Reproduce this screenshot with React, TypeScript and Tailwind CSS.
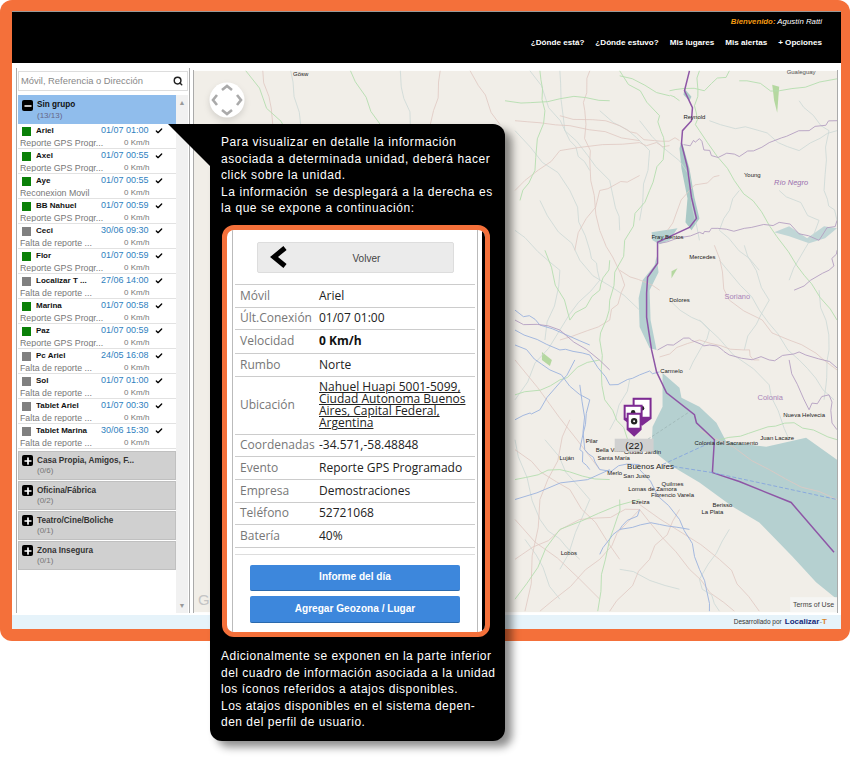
import { Check, Minus, Plus, Search } from "lucide-react";

const UNITS = [
  { name: "Ariel", time: "01/07 01:00", sub: "Reporte GPS Progr...", on: true },
  { name: "Axel", time: "01/07 00:55", sub: "Reporte GPS Progr...", on: true },
  { name: "Aye", time: "01/07 00:55", sub: "Reconexion Movil", on: true },
  { name: "BB Nahuel", time: "01/07 00:59", sub: "Reporte GPS Progr...", on: true },
  { name: "Ceci", time: "30/06 09:30", sub: "Falta de reporte ...", on: false },
  { name: "Flor", time: "01/07 00:59", sub: "Reporte GPS Progr...", on: true },
  { name: "Localizar T ...", time: "27/06 14:00", sub: "Falta de reporte ...", on: false },
  { name: "Marina", time: "01/07 00:58", sub: "Reporte GPS Progr...", on: true },
  { name: "Paz", time: "01/07 00:59", sub: "Reporte GPS Progr...", on: true },
  { name: "Pc Ariel", time: "24/05 16:08", sub: "Falta de reporte ...", on: false },
  { name: "Sol", time: "01/07 01:00", sub: "Falta de reporte ...", on: false },
  { name: "Tablet Ariel", time: "01/07 00:30", sub: "Falta de reporte ...", on: false },
  { name: "Tablet Marina", time: "30/06 15:30", sub: "Falta de reporte ...", on: false },
];

const GROUPS = [
  { name: "Casa Propia, Amigos, F...", count: "(0/6)" },
  { name: "Oficina/Fábrica", count: "(0/2)" },
  { name: "Teatro/Cine/Boliche", count: "(0/1)" },
  { name: "Zona Insegura", count: "(0/1)" },
];

const NAV = ["¿Dónde está?", "¿Dónde estuvo?", "Mis lugares", "Mis alertas", "+ Opciones"];

const DETAILS = [
  { label: "Móvil", value: "Ariel", h: "h-[23px]" },
  { label: "Últ.Conexión", value: "01/07 01:00", h: "h-[22px]" },
  { label: "Velocidad", value: "0 Km/h", h: "h-[24px]", bold: true },
  { label: "Rumbo", value: "Norte", h: "h-[23px]" },
  { label: "Ubicación", value: "Nahuel Huapi 5001-5099, Ciudad Autonoma Buenos Aires, Capital Federal, Argentina", h: "h-[58px]", link: true },
  { label: "Coordenadas", value: "-34.571,-58.48848", h: "h-[22px]" },
  { label: "Evento", value: "Reporte GPS Programado", h: "h-[23px]" },
  { label: "Empresa", value: "Demostraciones", h: "h-[23px]" },
  { label: "Teléfono", value: "52721068", h: "h-[22px]" },
  { label: "Batería", value: "40%", h: "h-[23px]" },
];

const GREEN_ROADS = [
  "M245 70L290 140",
  "M620 70L660 115L665 145L650 190L625 240L610 300L600 340L605 400L628 440",
  "M700 70L695 105L700 130L735 180L770 225L805 275L838 320",
  "M515 395L560 380L600 360",
  "M545 250L570 320L600 290L610 260",
  "M515 480L560 470L610 480",
  "M620 500L610 540L598 612",
  "M515 600L560 530L640 500",
  "M670 90L705 90L730 70",
  "M720 440L760 430L795 423L838 440",
  "M620 75L670 95L680 100",
  "M540 70L545 110L535 170L520 200",
  "M505 100L560 98L610 100",
  "M740 80L780 90L838 78",
  "M350 70L380 124",
];

const PINK_ROADS = [
  "M262 70L272 124",
  "M470 70L500 124",
  "M515 360L600 470",
  "M515 190L560 150L640 142L670 145",
  "M560 115L620 125L655 140L680 140",
  "M720 175L690 190L668 230",
  "M540 612L600 560L640 510L690 570L735 612",
  "M640 505L720 560L760 612",
  "M515 520L600 600",
  "M660 357L700 340L745 350L760 360",
  "M515 560L580 520L640 510",
  "M515 120L570 125L640 140",
  "M590 70L585 110L590 160L600 230",
  "M600 230L625 285L610 320L560 340",
  "M620 270L660 290",
  "M570 420L540 500L525 612",
  "M715 245L730 300L790 340L838 370",
  "M700 430L770 470L838 500",
  "M640 175L600 190L575 250",
  "M515 450L570 490L620 560",
  "M680 510L650 560L610 612",
  "M440 70L430 124",
];

const BLUE_ROADS = [
  "M515 330L560 350L590 355L610 385L640 375L660 372",
  "M515 345L550 370L590 400L580 450L590 470",
  "M580 385L585 450L600 470L640 465",
  "M640 470L680 520L700 570L710 612",
  "M620 530L660 525L690 530",
  "M575 360L540 410L515 420",
  "M610 470L515 500",
  "M640 510L620 530L600 555",
  "M515 310L540 325L590 345",
];

const GRAY_ROADS = [
  "M290 70L300 124",
  "M400 70L410 124",
  "M515 130L570 190L590 250L600 280L560 330L515 400",
  "M530 70L570 140L590 170",
  "M640 120L690 175L700 240",
  "M720 260L760 310L800 360L835 400",
  "M820 290L830 350L825 400",
  "M515 440L540 520L580 560",
  "M560 70L565 130L610 180L620 230",
  "M600 110L650 150L640 220",
  "M540 200L580 260L640 310",
  "M745 245L770 300L745 350",
  "M700 320L770 385L790 440",
  "M515 230L560 270L545 340",
  "M800 100L830 130L825 190L838 220",
  "M710 120L760 130L800 150L838 130",
  "M780 190L820 220L790 280",
  "M630 380L610 430",
  "M545 440L590 500L560 570",
  "M730 530L700 580L720 612",
  "M620 570L680 590",
  "M740 190L720 230L760 270",
  "M670 300L710 330L690 370",
  "M525 540L560 600",
];

const BORDERS = [
  "M684 144L700 138L712 155L740 156L770 142L810 130L838 120",
  "M660 243L700 232L712 228L745 228L780 222L820 240L838 220",
  "M658 350L690 338L710 345L730 355L770 360L800 352L838 368",
  "M795 290L830 270L838 250",
  "M790 360L810 410L830 395L838 430",
  "M515 320L560 330L610 370",
];

// adds a small fixed wobble so that road lines don't look ruled
function wobble(d: string) {
  const nums = d.match(/\d+/g)!.map(Number);
  let seed = nums.reduce((a, b) => a + b, 0);
  const rnd = () => {
    seed = (seed * 9301 + 49297) % 233280;
    return seed / 233280 - 0.5;
  };
  let out = `M${nums[0]} ${nums[1]}`;
  for (let i = 2; i < nums.length; i += 2) {
    const [x0, y0, x1, y1] = [nums[i - 2], nums[i - 1], nums[i], nums[i + 1]];
    for (let s = 1; s <= 4; s++) {
      const off = s === 4 ? 0 : 1;
      out += `L${(x0 + ((x1 - x0) * s) / 4 + off * rnd() * 6).toFixed(1)} ${(y0 + ((y1 - y0) * s) / 4 + off * rnd() * 6).toFixed(1)}`;
    }
  }
  return out;
}

function Pin({ x, y, w, h, dark }: { x: number; y: number; w: number; h: number; dark?: boolean }) {
  return (
    <g>
      <path d={`M${x} ${y}h${w}v${h - 7}l-${w / 2} 7l-${w / 2} -7z`} fill="#7d2a92" />
      <rect x={x + 2} y={y + 2} width={w - 4} height={h - 11} fill="#fff" />
      <circle cx={x + w / 2} cy={y + (h - 7) / 2} r={dark ? 3.2 : 2.2} fill="#222" />
      {dark && <circle cx={x + w / 2} cy={y + (h - 7) / 2} r={1} fill="#fff" />}
    </g>
  );
}

function MapDrawing() {
  return (
    <svg viewBox="193 70 645 543" className="block h-full w-full" xmlns="http://www.w3.org/2000/svg">
      <rect x="193" y="70" width="645" height="543" fill="#f1eee8" />

      {/* agua */}
      <path
        d="M663 373L680 388L682 398L700 407L717 423L727 442L767 447L807 438L838 460L838 600L817 583L793 557L760 523L733 507L700 483L673 467L652 450L653 427L663 407L663 393Z"
        fill="#b5d0d0"
      />
      <path d="M657 256L659 272L650 290L651 320L657 350L650 348L640 327L639 298L643 280L655 265Z" fill="#b5d0d0" />
      <path d="M682 140L690 168L695 197L700 218L692 230L686 222L688 198L682 168L680 148Z" fill="#a9c9c6" />
      <path d="M652 232L678 228L670 240L660 244L653 240Z" fill="#b5d0d0" />
      <path d="M685 88L692 96L690 100L684 94Z" fill="#a9c9c6" />
      <path d="M775 232L790 226L808 238L825 226L838 228L826 238L810 243L790 236Z" fill="#c0d6d6" />

      {/* verdes */}
      <path d="M773 84L780 86L778 112L775 100Z" fill="#b5d8a0" />
      <path d="M542 352L552 360L550 366L542 360Z" fill="#b5d8a0" />
      <path d="M672 271L678 268L672 278Z" fill="#b5d8a0" />

      {GRAY_ROADS.map((d) => (
        <path key={d} d={wobble(d)} fill="none" stroke="#cbd8d6" strokeWidth="0.8" />
      ))}
      {PINK_ROADS.map((d) => (
        <path key={d} d={wobble(d)} fill="none" stroke="#e0c8c2" strokeWidth="0.8" />
      ))}
      {GREEN_ROADS.map((d) => (
        <path key={d} d={wobble(d)} fill="none" stroke="#b4deae" strokeWidth="0.9" />
      ))}
      {BLUE_ROADS.map((d) => (
        <path key={d} d={wobble(d)} fill="none" stroke="#9ab2de" strokeWidth="0.9" />
      ))}
      {BORDERS.map((d) => (
        <path key={d} d={wobble(d)} fill="none" stroke="#b49fc2" strokeWidth="0.9" />
      ))}

      {/* limite internacional */}
      <path
        d="M690 70L685 90L693 107L692 120L683 130L682 143L688 167L692 197L697 218L690 227L677 233L658 242L658 263L648 277L647 293L647 317L652 350L657 372L667 393L695 415L697 423L715 440L713 473L740 482L792 503L835 553"
        fill="none"
        stroke="#8e56a6"
        strokeWidth="1.5"
      />
      <path d="M663 465L713 442M668 466L713 473L838 500" fill="none" stroke="#7f9fe0" strokeWidth="0.8" strokeDasharray="4 2" />
      <path d="M640 445L690 412" fill="none" stroke="#9db5b5" strokeWidth="0.8" strokeDasharray="3 2" />

      <g fontFamily="'Liberation Sans', sans-serif" fontSize="6" fill="#222">
        <text x="300" y="75" textAnchor="middle">Gösw</text>
        <text x="802" y="73" textAnchor="middle" fill="#555">Gualeguay</text>
        <text x="695" y="118" textAnchor="middle">Reynold</text>
        <text x="753" y="176" textAnchor="middle">Young</text>
        <text x="668" y="239" textAnchor="middle">Fray Bentos</text>
        <text x="703" y="259" textAnchor="middle">Mercedes</text>
        <text x="680" y="302" textAnchor="middle">Dolores</text>
        <text x="672" y="373" textAnchor="middle">Carmelo</text>
        <text x="805" y="417" textAnchor="middle">Nueva Helvecia</text>
        <text x="778" y="440" textAnchor="middle">Juan Lacaze</text>
        <text x="727" y="445" textAnchor="middle">Colonia del Sacramento</text>
        <text x="592" y="443" textAnchor="middle">Pilar</text>
        <text x="567" y="460" textAnchor="middle">Luján</text>
        <text x="610" y="452" textAnchor="middle">Bella Vista</text>
        <text x="643" y="454" textAnchor="middle">Ciudad Jardín</text>
        <text x="614" y="460" textAnchor="middle">Santa María</text>
        <text x="615" y="475" textAnchor="middle">Merlo</text>
        <text x="637" y="478" textAnchor="middle">San Justo</text>
        <text x="673" y="486" textAnchor="middle">Quilmes</text>
        <text x="653" y="491" textAnchor="middle">Lomas de Zamora</text>
        <text x="673" y="497" textAnchor="middle">Florencio Varela</text>
        <text x="641" y="505" textAnchor="middle">Ezeiza</text>
        <text x="723" y="508" textAnchor="middle">Berisso</text>
        <text x="713" y="515" textAnchor="middle">La Plata</text>
        <text x="569" y="556" textAnchor="middle">Lobos</text>
        <text x="651" y="469" textAnchor="middle" fontSize="8">Buenos Aires</text>
        <text x="792" y="185" textAnchor="middle" fontSize="7.5" fontStyle="italic" fill="#9a6fae">Río Negro</text>
        <text x="738" y="299" textAnchor="middle" fontSize="7.5" fill="#a884b8">Soriano</text>
        <text x="771" y="400" textAnchor="middle" fontSize="7.5" fill="#a884b8">Colonia</text>
      </g>

      <Pin x={633} y={398} w={19} h={28} />
      <Pin x={624} y={405} w={19} h={22} />
      <Pin x={627} y={413} w={15} h={24} dark />
      <rect x="615" y="439" width="39" height="13" fill="#d0d0d0" />
      <text x="634.5" y="449.5" textAnchor="middle" fontFamily="'Liberation Sans', sans-serif" fontSize="10" fill="#111">(22)</text>

      <text x="197" y="606" fontFamily="'Liberation Sans', sans-serif" fontSize="15" fill="#c4c4c4">Go</text>
      <rect x="791" y="598" width="47" height="15" fill="#f5f5f3" />
      <text x="835" y="608" textAnchor="end" fontFamily="'Liberation Sans', sans-serif" fontSize="7" fill="#444">Terms of Use</text>
    </svg>
  );
}

function NavControl() {
  return (
    <svg viewBox="0 0 40 40" className="absolute left-[13px] top-[10px] h-[40px] w-[40px] drop-shadow-md" xmlns="http://www.w3.org/2000/svg">
      <circle cx="20" cy="20" r="17.5" fill="#fff" />
      <g fill="none" stroke="#aaa" strokeWidth="2.6">
        <path d="M15 10L20 6L25 10" />
        <path d="M15 30L20 34L25 30" />
        <path d="M10 15L6 20L10 25" />
        <path d="M30 15L34 20L30 25" />
      </g>
    </svg>
  );
}

function UnitRow({ name, time, sub, on }: { name: string; time: string; sub: string; on: boolean }) {
  return (
    <div className="h-[25px] border-b border-[#e2e2e2] pl-[2px]">
      <div className="flex h-[14px] items-center">
        <span className={on ? "ml-[2px] h-[9px] w-[9px] bg-[#0a8008]" : "ml-[2px] h-[9px] w-[9px] bg-[#808080]"} />
        <span className="ml-[5px] w-[65px] truncate text-[8px] font-bold text-[#111]">{name}</span>
        <span className="w-[54px] text-[9px] text-[#2f7fc0]">{time}</span>
        <Check className="h-[8px] w-[8px] text-black" strokeWidth={4} />
      </div>
      <div className="flex h-[10px] items-center text-[8.8px] leading-none text-[#777]">
        <span className="w-[104px] truncate">{sub}</span>
        <span className="w-[24px] whitespace-nowrap text-right text-[8px]">0 Km/h</span>
      </div>
    </div>
  );
}

function GroupRow({ name, count }: { name: string; count: string }) {
  return (
    <div className="mt-[1px] flex h-[29px] border border-[#c0c0c0] bg-[#d0d0d0] pl-[3px] pt-[3px]">
      <span className="flex h-[11px] w-[11px] items-center justify-center rounded-[2px] bg-black">
        <Plus className="h-[10px] w-[10px] text-white" strokeWidth={4} />
      </span>
      <div className="ml-[4px] pt-[2px] leading-none">
        <p className="text-[8.2px] font-bold text-[#333]">{name}</p>
        <p className="mt-[2px] text-[8px] text-[#777]">{count}</p>
      </div>
    </div>
  );
}

function Sidebar() {
  return (
    <aside className="mt-[5px] flex h-[545px] w-[174px] shrink-0 flex-col border-x border-[#aaaaaa] px-[1px] pt-[3px]">
      <div className="flex h-[20px] items-center justify-between border border-[#dddddd] pl-[2px] pr-[4px] text-[9.4px] text-[#888]">
        <span>Móvil, Referencia o Dirección</span>
        <Search className="h-[10px] w-[10px] text-[#222]" strokeWidth={3.5} />
      </div>
      <div className="mt-[4px] flex min-h-0 flex-1">
        <div className="w-[158px]">
          <div className="flex h-[29px] bg-[#90bdec] pl-[4px] pt-[5px]">
            <span className="flex h-[11px] w-[11px] items-center justify-center rounded-[2px] bg-black">
              <Minus className="h-[10px] w-[10px] text-white" strokeWidth={4} />
            </span>
            <div className="ml-[4px] pt-[1px] leading-none">
              <p className="text-[8.2px] font-bold text-[#111]">Sin grupo</p>
              <p className="mt-[3px] text-[8px] text-[#668]">(13/13)</p>
            </div>
          </div>
          {UNITS.map((u) => (
            <UnitRow key={u.name} {...u} />
          ))}
          <div className="h-[1px]" />
          {GROUPS.map((g) => (
            <GroupRow key={g.name} {...g} />
          ))}
        </div>
        <div className="flex w-[12px] flex-col items-center justify-between bg-[#f1f1f1] pb-[4px] pt-[4px] text-[7px] leading-none text-[#999]">
          <span>▲</span>
          <span>▼</span>
        </div>
      </div>
    </aside>
  );
}

function DetailCard() {
  return (
    <div className="ml-[12px] mt-[8px] flex h-[412px] w-[268px] overflow-hidden rounded-[12px] border-[5px] border-[#f4703a] bg-white tracking-normal">
      <div className="ml-[5px] flex w-[246px] flex-col border-x border-[#bbbbbb] font-['Open_Sans',sans-serif]">
        <button className="mx-auto mt-[12px] flex h-[31px] w-[197px] items-center rounded-[2px] border border-[#dddddd] bg-[#ebebeb] text-[10px] text-[#444]">
          <svg viewBox="0 0 18 22" className="ml-[11px] h-[22px] w-[18px]" xmlns="http://www.w3.org/2000/svg">
            <path d="M16 2L5 11L16 20" fill="none" stroke="#000" strokeWidth="5" />
          </svg>
          <span className="ml-[66px] pt-[3px] font-['Liberation_Sans',sans-serif]">Volver</span>
        </button>
        <div className="mx-[2px] mt-[11px] border-t border-[#cccccc]">
          {DETAILS.map((d) => (
            <div key={d.label} className={`flex items-center border-b border-[#cccccc] pl-[5px] ${d.h}`}>
              <span className="w-[79px] shrink-0 whitespace-nowrap text-[12px] text-[#777]">{d.label}</span>
              {d.link ? (
                <span className="w-[150px] text-[12px] leading-[12px] text-[#222] underline">{d.value}</span>
              ) : (
                <span className={d.bold ? "whitespace-nowrap text-[12px] font-bold text-[#111]" : "whitespace-nowrap text-[12px] text-[#222]"}>{d.value}</span>
              )}
            </div>
          ))}
        </div>
        <div className="mx-[2px] mt-[6px] border-t border-[#dddddd]" />
        <div className="mx-[17px] mt-[10px] flex flex-col gap-[5px] font-['Liberation_Sans',sans-serif] text-[10.1px] font-bold leading-none text-white">
          <button className="h-[26px] rounded-[2px] border-b border-[#2a69ad] bg-[#3d87dc]">Informe del día</button>
          <button className="h-[27px] rounded-[2px] border-b border-[#2a69ad] bg-[#3d87dc]">Agregar Geozona / Lugar</button>
        </div>
      </div>
      <div className="ml-auto w-[3px] bg-black" />
    </div>
  );
}

function Callout() {
  return (
    <>
      <svg viewBox="0 0 43 43" className="absolute left-[168px] top-[124px] h-[43px] w-[43px]" xmlns="http://www.w3.org/2000/svg">
        <path d="M0 0H43V43Z" fill="#000" />
      </svg>
      <div className="absolute left-[210px] top-[124px] h-[617px] w-[295px] rounded-[12px] rounded-tl-none bg-black pt-[10px] text-[12px] leading-[16.6px] text-white shadow-[7px_6px_9px_rgba(0,0,0,0.45)]">
        <p className="whitespace-nowrap pl-[11px] tracking-[0.57px]">
          Para visualizar en detalle la información
          <br />
          asociada a determinada unidad, deberá hacer
          <br />
          click sobre la unidad.
          <br />
          La información&nbsp; se desplegará a la derecha es
          <br />
          la que se expone a continuación:
        </p>
        <DetailCard />
        <p className="mt-[11px] whitespace-nowrap pl-[11px] tracking-[0.5px]">
          Adicionalmente se exponen en la parte inferior
          <br />
          del cuadro de información asociada a la unidad
          <br />
          los íconos referidos a atajos disponibles.
          <br />
          Los atajos disponibles en el sistema depen-
          <br />
          den del perfil de usuario.
        </p>
      </div>
    </>
  );
}

export default function App() {
  return (
    <div className="relative h-[762px] w-[850px] overflow-hidden bg-white font-['Liberation_Sans',sans-serif]">
      <div className="h-[641px] rounded-[12px] bg-[#f4703a] pb-[12px] pl-[12px] pr-[9px] pt-[11px]">
        <div className="flex h-full flex-col rounded-tr-[6px] bg-white">
          <header className="flex h-[52px] shrink-0 flex-col items-end border-t border-[#999999] bg-black pr-[19px] pt-[4px]">
            <p className="text-[7.8px] italic leading-[12px] text-white">
              <span className="font-bold text-[#f39a12]">Bienvenido:</span> Agustín Ratti
            </p>
            <nav className="mt-[9px] flex gap-[11px] text-[8.1px] font-bold leading-[12px] text-white">
              {NAV.map((n) => (
                <span key={n}>{n}</span>
              ))}
            </nav>
          </header>
          <main className="flex min-h-0 flex-1 pl-[4px]">
            <Sidebar />
            <div className="relative ml-[3px] mt-[7px] h-[543px] w-[645px] border-x border-[#aaaaaa]">
              <MapDrawing />
              <NavControl />
            </div>
          </main>
          <footer className="flex h-[14px] shrink-0 items-center justify-end gap-[3px] bg-[#e6f3fa] pr-[14px] text-[6.5px] text-[#333]">
            <span>Desarrollado por</span>
            <span className="text-[8px] font-bold text-[#14287a]">
              Localizar<span className="font-normal text-[#888]">-</span>
              <span className="text-[#d9822b]">T</span>
            </span>
          </footer>
        </div>
      </div>
      <Callout />
    </div>
  );
}
